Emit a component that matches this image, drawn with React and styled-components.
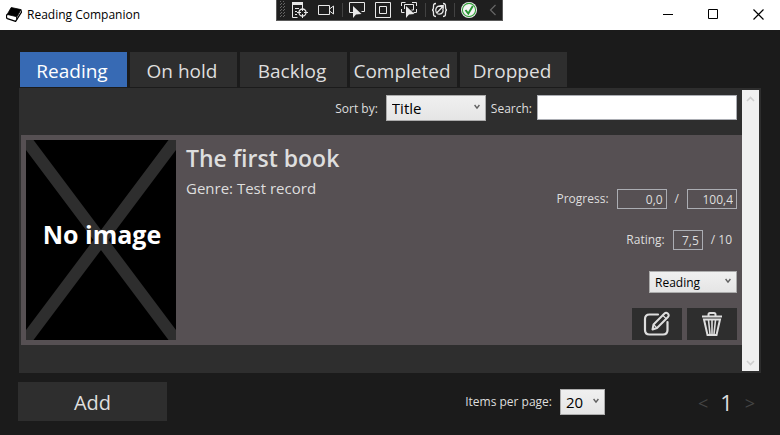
import React, { useState } from "react";
import styled, { createGlobalStyle } from "styled-components";

const GlobalStyle = createGlobalStyle`
  *, *::before, *::after { box-sizing: border-box; }
  body {
    margin: 0;
    background: #1b1b1b;
    color: #dedede;
    font: 12px/16px "Open Sans", "Noto Sans", sans-serif;
  }
  button, input, select { font: inherit; color: inherit; margin: 0; }
`;

const Window = styled.div`
  display: flex;
  flex-direction: column;
  min-height: 100vh;
`;

const TitleBar = styled.header`
  position: relative;
  display: flex;
  align-items: center;
  height: 30px;
  background: #fff;
  color: #000;
`;

const AppTitle = styled.h1`
  flex: 1;
  display: flex;
  align-items: center;
  gap: 5px;
  margin: 0;
  padding-left: 6px;
  font-size: 12px;
  font-weight: 400;
`;

const CaptionButton = styled.button`
  display: grid;
  place-items: center;
  width: 45px;
  height: 30px;
  padding: 0 0 2px 2px;
  border: 0;
  background: none;
`;

const DebugBar = styled.div`
  position: absolute;
  top: 0;
  left: 276px;
  display: flex;
  align-items: center;
  width: 227px;
  height: 21px;
  background: #1f1f1f;
  border: 1px solid #5a5a5a;
  border-top: 0;
`;

const Body = styled.main`
  flex: 1;
  display: flex;
  flex-direction: column;
  padding: 22px 19px 14px;
`;

const Tabs = styled.div`
  display: flex;
  gap: 3px;
  padding: 0 1px 1px;
`;

const Tab = styled.button`
  width: 107px;
  height: 35px;
  padding: 3px 3px 0 0;
  border: 0;
  background: ${(p) => (p.$active ? "#376ab4" : "#2e2e2e")};
  color: ${(p) => (p.$active ? "#fff" : "#dedede")};
  font-size: 19px;
  line-height: 26px;
  white-space: nowrap;
`;

const Panel = styled.section`
  flex: 1;
  display: flex;
  padding: 2px;
  background: #2e2e2e;
`;

const PanelContent = styled.div`
  flex: 1;
  min-width: 0;
`;

const Filters = styled.div`
  display: flex;
  align-items: center;
  justify-content: flex-end;
  gap: 5px;
  height: 45px;
  padding: 0 5px 10px;
`;

const Label = styled.label`
  padding: ${(p) => (p.$roomy ? "2px 3px 0" : "2px 0 0")};
`;

const Search = styled.input`
  width: 200px;
  height: 25px;
  padding: 0 4px;
  border: 1px solid #abadb3;
  background: #fff;
  color: #000;
`;

const SelectBox = styled.span`
  position: relative;
  display: block;
  width: ${(p) => p.$width};
  svg {
    position: absolute;
    right: 6px;
    top: 50%;
    margin-top: -4px;
    pointer-events: none;
  }
`;

const NativeSelect = styled.select`
  appearance: none;
  display: block;
  width: 100%;
  height: ${(p) => (p.$small ? "22px" : "26px")};
  padding: ${(p) => (p.$small ? "2px 14px 0 5px" : "0 14px 0 5px")};
  border: 1px solid #acacac;
  border-radius: 0;
  background: linear-gradient(#f0f0f0, #e5e5e5);
  color: #000;
  font-size: ${(p) => (p.$small ? "12px" : "15px")};
`;

const Card = styled.article`
  display: flex;
  gap: 10px;
  padding: 5px;
  background: #565053;
`;

const Cover = styled.svg`
  flex: none;
  width: 150px;
  height: 200px;
  background: #000;
`;

const Info = styled.div`
  flex: 1;
  padding-top: 2px;
`;

const BookTitle = styled.h2`
  margin: 0;
  font-size: 23px;
  line-height: 32px;
  font-weight: 600;
`;

const Genre = styled.p`
  margin: 4px 0 0;
  font-size: 15px;
  line-height: 20px;
`;

const Controls = styled.div`
  display: flex;
  flex-direction: column;
  align-items: flex-end;
  justify-content: flex-end;
`;

const Field = styled.div`
  display: flex;
  align-items: center;
  gap: 8px;
  margin-bottom: 21px;
  padding-right: ${(p) => (p.$inset ? "5px" : "0")};
`;

const NumberInput = styled.input`
  width: ${(p) => p.$width};
  height: 20px;
  padding: 0 3px;
  border: 1px solid #abadb3;
  background: transparent;
  text-align: right;
`;

const Actions = styled.div`
  display: flex;
  gap: 5px;
  margin-top: 15px;
`;

const ActionButton = styled.button`
  display: grid;
  place-items: center;
  width: 50px;
  height: 32px;
  padding: 0;
  border: 0;
  background: #2e2e2e;
`;

const ScrollTrack = styled.div`
  display: flex;
  flex-direction: column;
  justify-content: space-between;
  width: 17px;
  background: #f0f0f0;
`;

const ScrollButton = styled.button`
  display: grid;
  place-items: center;
  width: 17px;
  height: 17px;
  padding: 0;
  border: 0;
  background: none;
  color: #cfcfcf;
`;

const Footer = styled.footer`
  display: flex;
  align-items: center;
  margin: 9px 0 0 -1px;
`;

const AddButton = styled.button`
  width: 149px;
  height: 39px;
  padding: 3px 0 0;
  border: 0;
  background: #2e2e2e;
  font-size: 20px;
  line-height: 26px;
`;

const PageSize = styled.div`
  display: flex;
  align-items: center;
  gap: 8px;
  margin-left: auto;
`;

const Pager = styled.nav`
  display: flex;
  align-items: center;
  justify-content: space-between;
  width: 57px;
  margin: 0 6px 0 93px;
  font-size: 22px;
  line-height: 30px;
`;

const PagerButton = styled.button`
  display: grid;
  place-items: center;
  padding: 3px 0 0;
  border: 0;
  background: none;
  color: #444;
  font-size: 18px;
  line-height: 24px;
`;

const Select = ({ id, label, width, small, options }) => (
  <SelectBox $width={width}>
    <NativeSelect id={id} aria-label={label} $small={small}>
      {options.map((o) => (
        <option key={o}>{o}</option>
      ))}
    </NativeSelect>
    <svg width="6" height="6" viewBox="0 0 6 6" fill="none" stroke="#606060" strokeWidth="1.4">
      <path d="M.6 1 3 4.2 5.4 1" />
    </svg>
  </SelectBox>
);

const BookIcon = () => (
  <svg width="16" height="16" viewBox="0 0 16 16">
    <path d="M5.200.5 15 2.600 11 9.800 1.200 7.400Z" fill="#000" stroke="#000" strokeWidth=".8" strokeLinejoin="round" />
    <path d="M1.200 7.400C0 9 .2 11 1.400 11.600L9.600 14.300 15.500 5.200" fill="none" stroke="#000" strokeWidth="1.300" strokeLinecap="round" strokeLinejoin="round" />
    <path d="m10.600 10 .2 2.400M15 2.600l.5 2.600" fill="none" stroke="#000" />
  </svg>
);

const DebugIcons = () => (
  <svg width="225" height="20" viewBox="277 0 225 20" fill="none" stroke="#e8e8e8">
    <g fill="#666" stroke="none">
      {[0, 1, 2, 3, 4, 5].map((r) => (
        <React.Fragment key={r}>
          <path d={`M280 ${1 + r * 3}h1v1h-1zM283 ${1 + r * 3}h1v1h-1z`} />
          {r < 5 && <path d={`M281 ${3 + r * 3}h1v1h-1zM284 ${3 + r * 3}h1v1h-1z`} />}
        </React.Fragment>
      ))}
    </g>
    <path d="M342.500 3v14M425.500 3v14M454.500 3v14" stroke="#424242" />
    <path d="M292 2h11v3h-11z" fill="#e8e8e8" stroke="none" />
    <path d="M292.500 4v13.500h5M302.500 4v3M295 8.500h4M295 11.500h2M295 14.500h2" />
    <circle cx="302.500" cy="12.500" r="3.500" strokeWidth="1.300" />
    <path d="M302.500 7v4M302.500 14v4M297 12.500h4M304 12.500h4" />
    <path d="M318.500 5.500h11v9h-11zM329.500 9 333.500 6v8l-4-3" />
    <path d="M353 12.500h-3.500v-10h15v9h-3M375.500 2.500h15v15h-15zM379.500 6.500h7v7h-7z" />
    <path d="M353 6v12l3-3.500 5.500-.5Z" fill="#e8e8e8" stroke="none" />
    <path d="M401.500 6V2.500h4M412 2.500h4.500V6M416.500 9v3.500h-3M401.500 9v3.500h3M404.500 9V4.500h9V10h-2" />
    <path d="M406 6v12l3-3.500 5.500-.5Z" fill="#e8e8e8" stroke="none" />
    <path d="M436 3.500c-2.500 0-2.500 1-2.500 3.500 0 2-.5 3-1.500 3 1 0 1.500 1 1.500 3 0 2.500 0 3.500 2.500 3.500M443 3.500c2.500 0 2.500 1 2.500 3.500 0 2 .5 3 1.500 3-1 0-1.500 1-1.500 3 0 2.500 0 3.500-2.500 3.500" strokeWidth="1.300" />
    <path d="M436.300 12.500c-1.500-3 0-6.300 3-6.500 1.500 0 2.500.5 3.200 1.300M442.800 8.500c1 3-.5 5.500-3.300 5.700-1 0-2-.4-2.700-1M436.500 13.200l6.500-7M440.200 5.700h3v3" strokeWidth="1.300" />
    <circle cx="469" cy="10" r="8" fill="#f4f4f4" stroke="none" />
    <circle cx="469" cy="10" r="6.600" stroke="#35a13b" strokeWidth="1.100" />
    <path d="m465.500 10 2.800 3.500 4.500-7.500" stroke="#279532" strokeWidth="1.900" />
    <path d="m495.500 5-5 5 5 5" stroke="#666" strokeWidth="1.200" />
  </svg>
);

const EditIcon = () => (
  <svg width="28" height="26" viewBox="0 0 28 26" fill="none" stroke="#dedede" strokeWidth="2.200" strokeLinecap="round" strokeLinejoin="round">
    <path d="M15 3.500H6.500C3.500 3.500 2 5 2 8v11c0 3 1.500 4.500 4.500 4.500H20c3 0 4.500-1.500 4.500-4.500v-8" />
    <path d="m10.500 13.500 11-11c2-2 5.500 1 3.500 3.500l-11 11-4.500 1.500Z" strokeWidth="2" />
    <path d="m11 14 2.500 2.500M20 4.500l3 3" strokeWidth="1.200" />
  </svg>
);

const TrashIcon = () => (
  <svg width="22" height="26" viewBox="0 0 22 26" fill="none" stroke="#dedede" strokeWidth="2">
    <path d="M1 5.500h20M7.500 5V3.500c0-1 .5-1.500 1.500-1.500h4c1 0 1.500.500 1.500 1.500V5" />
    <path d="m3 8.500 3.500 15.500h9L19 8.500Z" />
    <path d="m7.500 9 1.500 14M11 9v14M14.500 9 13 23" strokeWidth="1.600" />
  </svg>
);

const Chevron = ({ down }) => (
  <svg width="9" height="8" viewBox="0 0 9 8" fill="none" stroke="currentColor" strokeWidth="1.600">
    <path d={down ? "M1 2l3.500 3.500L8 2" : "M1 6l3.500-3.500L8 6"} />
  </svg>
);

const TABS = ["Reading", "On hold", "Backlog", "Completed", "Dropped"];

export default function App() {
  const [active, setActive] = useState("Reading");
  return (
    <Window>
      <GlobalStyle />
      <TitleBar>
        <AppTitle>
          <BookIcon />
          Reading Companion
        </AppTitle>
        <CaptionButton aria-label="Minimize">
          <svg width="11" height="11"><path d="M0 5.500h10" stroke="#000" /></svg>
        </CaptionButton>
        <CaptionButton aria-label="Maximize">
          <svg width="11" height="11"><path d="M.5.5h9v9h-9z" fill="none" stroke="#000" /></svg>
        </CaptionButton>
        <CaptionButton aria-label="Close">
          <svg width="11" height="11"><path d="m.5.5 10 10M10.500.5l-10 10" stroke="#000" strokeWidth="1.200" /></svg>
        </CaptionButton>
        <DebugBar>
          <DebugIcons />
        </DebugBar>
      </TitleBar>
      <Body>
        <Tabs role="tablist">
          {TABS.map((t) => (
            <Tab key={t} role="tab" aria-selected={t === active} $active={t === active} onClick={() => setActive(t)}>
              {t}
            </Tab>
          ))}
        </Tabs>
        <Panel>
          <PanelContent>
            <Filters>
              <Label htmlFor="sort" $roomy>Sort by:</Label>
              <Select id="sort" width="100px" options={["Title", "Rating"]} />
              <Label htmlFor="search">Search:</Label>
              <Search id="search" type="text" />
            </Filters>
            <Card>
              <Cover viewBox="0 0 150 200" role="img" aria-label="No image">
                <path d="M0 0 150 200M150 0 0 200" stroke="#2e2e2e" strokeWidth="12" />
                <text x="76" y="104" textAnchor="middle" fill="#fff" fontSize="25" fontWeight="700">No image</text>
              </Cover>
              <Info>
                <BookTitle>The first book</BookTitle>
                <Genre>Genre: Test record</Genre>
              </Info>
              <Controls>
                <Field>
                  <label htmlFor="progress">Progress:</label>
                  <NumberInput id="progress" $width="50px" defaultValue="0,0" />
                  <span>/</span>
                  <NumberInput aria-label="Total" $width="50px" defaultValue="100,4" />
                </Field>
                <Field $inset>
                  <label htmlFor="rating">Rating:</label>
                  <NumberInput id="rating" $width="30px" defaultValue="7,5" />
                  <span>/ 10</span>
                </Field>
                <Select label="Status" width="88px" small options={TABS} />
                <Actions>
                  <ActionButton aria-label="Edit"><EditIcon /></ActionButton>
                  <ActionButton aria-label="Delete"><TrashIcon /></ActionButton>
                </Actions>
              </Controls>
            </Card>
          </PanelContent>
          <ScrollTrack>
            <ScrollButton aria-label="Scroll up"><Chevron /></ScrollButton>
            <ScrollButton aria-label="Scroll down"><Chevron down /></ScrollButton>
          </ScrollTrack>
        </Panel>
        <Footer>
          <AddButton>Add</AddButton>
          <PageSize>
            <label htmlFor="page-size">Items per page:</label>
            <Select id="page-size" width="45px" options={["20", "50"]} />
          </PageSize>
          <Pager aria-label="Pages">
            <PagerButton aria-label="Previous page">&lt;</PagerButton>
            <span>1</span>
            <PagerButton aria-label="Next page">&gt;</PagerButton>
          </Pager>
        </Footer>
      </Body>
    </Window>
  );
}
